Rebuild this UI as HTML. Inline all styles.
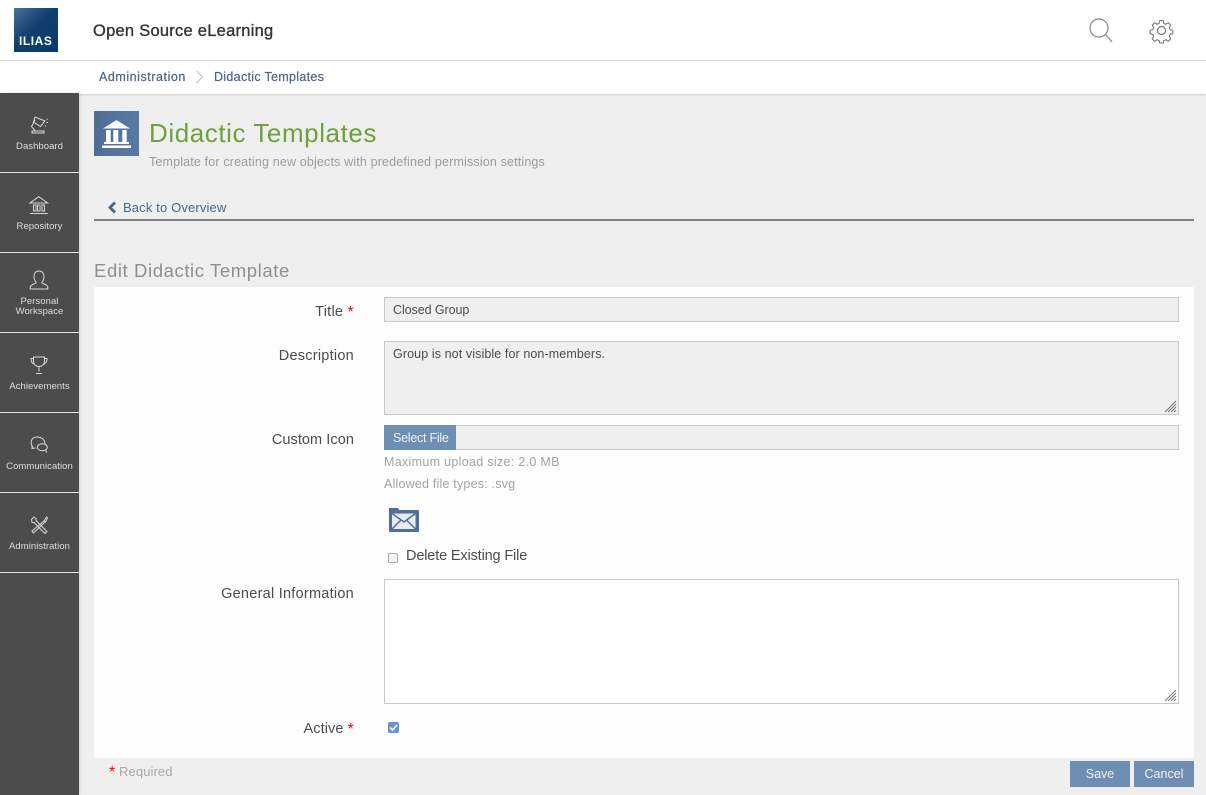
<!DOCTYPE html>
<html lang="en"><head><meta charset="utf-8"><title>Didactic Templates</title>
<style>
html,body{margin:0;padding:0}
body{width:1206px;height:795px;overflow:hidden;position:relative;background:#efefef;font-family:"Liberation Sans",sans-serif;color:#4c4c4c}
.a{position:absolute;white-space:nowrap}
.box{position:absolute;box-sizing:border-box}
.t{position:absolute;white-space:nowrap;line-height:20px;height:20px}
.lab{font-size:14.5px;color:#4c4c4c;text-align:right;right:852px;letter-spacing:.25px}
.req{color:#f00;font-size:16px;line-height:0;position:relative;top:1px}
.nav{position:absolute;left:0;width:79px;height:80px;border-bottom:1px solid #e8e8e8;box-sizing:border-box}
.nav span{position:absolute;left:0;width:79px;text-align:center;font-size:9.5px;line-height:10px;color:#ddd;letter-spacing:.05px}
.nav svg{position:absolute;left:24px;top:20px;width:30px;height:24px;fill:none;stroke:#d8d8d8;stroke-width:1;overflow:visible}
.field{background:#efefef;border:1px solid #c8c8c8}
.grip{position:absolute;right:1px;bottom:1px}
.btn{position:absolute;background:#6f8eb3;color:#f2f2f2;font-size:12.5px;text-align:center;line-height:27px;height:26px;top:761px}
</style></head><body>
<div class="box" style="left:0;top:0;width:1206px;height:61px;background:#fff;border-bottom:1px solid #ddd"></div>
<div class="box" style="left:0;top:61px;width:1206px;height:33px;background:#fff;box-shadow:0 1px 2px rgba(0,0,0,.15)"></div>
<div class="box" style="left:14px;top:8px;width:44px;height:44px;background:linear-gradient(135deg,#4d6f99 0%,#0f3f6e 45%,#083a68 100%)"></div>
<div class="t" style="left:19px;top:31px;font-size:12px;font-weight:bold;color:#fff;letter-spacing:.55px">ILIAS</div>
<div class="t" style="left:93px;top:21px;font-size:16.5px;color:#333;-webkit-text-stroke:.35px #333;letter-spacing:.25px">Open Source eLearning</div>
<svg class="a" style="left:1085px;top:14px" width="32" height="32" viewBox="0 0 32 32" fill="none" stroke="#858585" stroke-width="1.200"><circle cx="14" cy="14" r="9"/><path d="M20.500 20.500l6.500 7.500"/></svg>
<svg class="a" style="left:1148px;top:17px" width="27" height="27" viewBox="0 0 27 27" fill="none" stroke="#777" stroke-width="1.200" stroke-linejoin="round"><circle cx="13.500" cy="13.500" r="4"/><path d="M11.600 2.500h3.800l.7 3.100 2.300 1 2.700-1.700 2.700 2.700-1.700 2.700 1 2.300 3 .7v3.800l-3 .7-1 2.300 1.700 2.700-2.700 2.700-2.700-1.700-2.300 1-.7 2.600h-3.800l-.7-2.600-2.300-1-2.700 1.700-2.700-2.700 1.700-2.700-1-2.300-3-.7v-3.800l3-.7 1-2.300-1.700-2.700 2.700-2.700 2.700 1.700 2.300-1z" transform="translate(1.300 1.300) scale(.9)"/></svg>
<div class="t" style="left:99px;top:67px;font-size:12.5px;color:#4c6586;-webkit-text-stroke:.2px #4c6586;letter-spacing:.55px">Administration</div>
<svg class="a" style="left:195px;top:70px" width="10" height="14" viewBox="0 0 10 14" fill="none" stroke="#bbb" stroke-width="1"><path d="M1.500 1l6 6-6 6"/></svg>
<div class="t" style="left:214px;top:67px;font-size:12.5px;color:#4c6586;-webkit-text-stroke:.2px #4c6586;letter-spacing:.31px">Didactic Templates</div>

<div class="box" style="left:0;top:93px;width:79px;height:702px;background:#4c4c4c;box-shadow:1px 0 3px rgba(0,0,0,.12)"></div>
<div class="nav" style="top:93px"><svg viewBox="0 0 30 24"><path d="M11 4l10 4-4.500 5.500-7-4.500zM11 7L7.500 13.500 11 17.500M8 18h12v2H8z"/><path d="M22.500 6.500l1-.5M22.500 9.500h1.500M21 12.500l1 1"/></svg><span style="top:49px">Dashboard</span></div>
<div class="nav" style="top:173px"><svg viewBox="0 0 30 24"><path d="M14.700 3.700L6 10h17.700zM6 20.500h17.700"/><rect x="9.500" y="12" width="2.500" height="6"/><rect x="13.500" y="12" width="2.500" height="6"/><rect x="18" y="12" width="2.500" height="6"/></svg><span style="top:49px">Repository</span></div>
<div class="nav" style="top:253px"><svg viewBox="0 0 30 24"><path d="M15-2c3.500 0 5 2.500 5 5.500 0 2.500-1 4.500-2.200 6 0 1.500 6 1.500 6 5V16H6.200v-1.500c0-3.500 6-3.500 6-5C11 8 10 6 10 3.500 10 .5 11.500-2 15-2z"/></svg><span style="top:44px">Personal<br>Workspace</span></div>
<div class="nav" style="top:333px"><svg viewBox="0 0 30 24" stroke-width="1.200"><path d="M9.500 4h11v4c0 3-2 5.500-5.500 5.500S9.500 11 9.500 8zM9.500 5.500H7c0 3.500 1 5 3.500 5.500M20.500 5.500H23c0 3.500-1 5-3.500 5.500M15 13.500v5M12 20.500h6"/></svg><span style="top:49px">Achievements</span></div>
<div class="nav" style="top:413px"><svg viewBox="0 0 30 24"><path d="M9 14.500C5 9 8 4 13 4s8 3 8 7M8 12.500v3l3.500-.5"/><ellipse cx="18.300" cy="14.300" rx="5" ry="3.500"/><path d="M21.500 17l1.200 2.700"/></svg><span style="top:49px">Communication</span></div>
<div class="nav" style="top:493px"><svg viewBox="0 0 30 24"><path d="M7.500 6.500L10 4l2 1.500v2L23 18.500 21 20.500 10 9.500H8z"/><path d="M22.500 4l1 1-2 4-1.500-1zM20 8L8 18l1.500 2L21 9"/></svg><span style="top:49px">Administration</span></div>

<div class="box" style="left:94px;top:111px;width:45px;height:45px;background:linear-gradient(90deg,#4f6d94,#5b7aa3)"></div>
<svg class="a" style="left:94px;top:111px" width="45" height="45" viewBox="0 0 45 45" fill="#fff"><path d="M22.500 9L36 17.500H9z"/><rect x="12" y="19" width="4.700" height="12"/><rect x="19.300" y="19" width="5" height="12"/><rect x="28.300" y="19" width="4.400" height="12"/><rect x="10" y="31" width="25" height="2"/><rect x="8" y="34.500" width="29" height="2.500"/></svg>
<div class="t" style="left:149px;top:118px;height:30px;line-height:30px;font-size:26px;color:#6ea03c;letter-spacing:.57px">Didactic Templates</div>
<div class="t" style="left:149px;top:152px;font-size:12.5px;color:#9b9b9b;letter-spacing:.16px">Template for creating new objects with predefined permission settings</div>
<svg class="a" style="left:107px;top:201px" width="10" height="13" viewBox="0 0 10 13" fill="none" stroke="#4c6586" stroke-width="2.800"><path d="M8 1.500L3 6.500l5 5"/></svg>
<div class="t" style="left:123px;top:198px;font-size:13px;color:#4c6586;letter-spacing:.14px">Back to Overview</div>
<div class="box" style="left:94px;top:219px;width:1100px;height:2px;background:#7f7f7f"></div>
<div class="t" style="left:94px;top:259px;height:24px;line-height:24px;font-size:18.5px;color:#8f8f8f;letter-spacing:.6px">Edit Didactic Template</div>

<div class="box" style="left:94px;top:287px;width:1100px;height:471px;background:#fdfdfd"></div>
<div class="t lab" style="top:302px">Title <span class="req">*</span></div>
<div class="t lab" style="top:346px">Description</div>
<div class="t lab" style="top:430px;letter-spacing:.07px">Custom Icon</div>
<div class="t lab" style="top:584px">General Information</div>
<div class="t lab" style="top:719px;letter-spacing:.1px">Active <span class="req">*</span></div>

<div class="box field" style="left:384px;top:297px;width:795px;height:25px"></div>
<div class="t" style="left:393px;top:300px;font-size:12.5px;letter-spacing:-.07px">Closed Group</div>
<div class="box field" style="left:384px;top:341px;width:795px;height:74px"><svg class="grip" width="13" height="13" viewBox="0 0 13 13" stroke="#777" stroke-width="1"><path d="M12 1L1 12M12 4L4 12M12 7L7 12M12 10L10 12"/></svg></div>
<div class="t" style="left:393px;top:344px;font-size:12.5px;letter-spacing:.1px">Group is not visible for non-members.</div>
<div class="box field" style="left:384px;top:425px;width:795px;height:25px"></div>
<div class="box" style="left:384px;top:425px;width:72px;height:25px;background:#6f8eb3"></div>
<div class="t" style="left:393px;top:428px;font-size:12.5px;color:#f2f2f2;letter-spacing:-.25px">Select File</div>
<div class="t" style="left:384px;top:452px;font-size:12.5px;color:#a3a3a3;letter-spacing:.31px">Maximum upload size: 2.0 MB</div>
<div class="t" style="left:384px;top:474px;font-size:12.5px;color:#a3a3a3;letter-spacing:.2px">Allowed file types: .svg</div>
<svg class="a" style="left:389px;top:508px" width="30" height="25" viewBox="0 0 30 25"><path d="M0 0h9l1 2h19a1 1 0 0 1 1 1v20a1 1 0 0 1-1 1H1a1 1 0 0 1-1-1z" fill="#4f6f99"/><rect x="3" y="5.500" width="23.500" height="15.500" fill="#e8edf3"/><path d="M3 5.500l12 8.500 11.500-8.500M3 21l9-9M26.500 21l-9-9" fill="none" stroke="#4f6f99" stroke-width="1.500"/></svg>
<div class="box" style="left:388px;top:553px;width:10px;height:10px;border:1px solid #aaa;border-radius:2px;background:#f2f2f2"></div>
<div class="t" style="left:406px;top:546px;font-size:14.5px;letter-spacing:-.15px">Delete Existing File</div>
<div class="box" style="left:384px;top:579px;width:795px;height:125px;background:#fff;border:1px solid #c8c8c8"><svg class="grip" width="13" height="13" viewBox="0 0 13 13" stroke="#777" stroke-width="1"><path d="M12 1L1 12M12 4L4 12M12 7L7 12M12 10L10 12"/></svg></div>
<div class="box" style="left:388px;top:722px;width:11px;height:11px;border-radius:2px;background:#6a93c6"></div>
<svg class="a" style="left:388px;top:722px" width="11" height="11" viewBox="0 0 11 11" fill="none" stroke="#fff" stroke-width="1.600"><path d="M2 5.500l2.500 2.500L9 3"/></svg>

<div class="t" style="left:109px;top:762px;font-size:13px;color:#a8a8a8;letter-spacing:.1px"><span class="req">*</span> Required</div>
<div class="btn" style="left:1070px;width:60px">Save</div>
<div class="btn" style="left:1134px;width:60px">Cancel</div>
</body></html>
